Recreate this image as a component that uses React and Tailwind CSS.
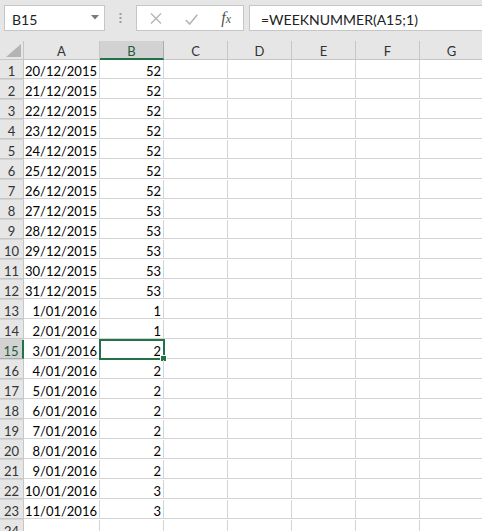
import React from "react";

const rows = [
  ["20/12/2015", 52], ["21/12/2015", 52], ["22/12/2015", 52], ["23/12/2015", 52],
  ["24/12/2015", 52], ["25/12/2015", 52], ["26/12/2015", 52], ["27/12/2015", 53],
  ["28/12/2015", 53], ["29/12/2015", 53], ["30/12/2015", 53], ["31/12/2015", 53],
  ["1/01/2016", 1], ["2/01/2016", 1], ["3/01/2016", 2], ["4/01/2016", 2],
  ["5/01/2016", 2], ["6/01/2016", 2], ["7/01/2016", 2], ["8/01/2016", 2],
  ["9/01/2016", 2], ["10/01/2016", 3], ["11/01/2016", 3], ["", ""],
];

const cols = ["A", "B", "C", "D", "E", "F", "G"];
const gridCols = "grid grid-cols-[24px_76px_64px_64px_64px_64px_64px_64px]";

export default function App() {
  return (
    <div
      className="w-[482px] h-[531px] overflow-hidden bg-white text-[13px] text-black"
      style={{ fontFamily: "Lato, 'Open Sans', sans-serif" }}
    >
      {/* toolbar */}
      <div className="h-[41px] bg-[#e6e6e6] flex items-start pt-[5px] pl-[4px]">
        <div className="w-[101px] h-[26px] bg-white border border-[#c6c6c6] flex items-center justify-between pl-[7px] pr-[5px]">
          <span className="text-[14px] text-[#222] pt-[2px]">B15</span>
          <svg width="8" height="5" viewBox="0 0 8 5" className="mt-[-1px]">
            <path d="M0 0 H8 L4 4.5 Z" fill="#7a7a7a" />
          </svg>
        </div>
        <div className="w-[31px] h-[26px] flex items-center justify-center">
          <svg width="3" height="11" viewBox="0 0 3 11">
            <rect x="0.5" y="0" width="2" height="2" fill="#9c9c9c" />
            <rect x="0.5" y="4" width="2" height="2" fill="#9c9c9c" />
            <rect x="0.5" y="8" width="2" height="2" fill="#9c9c9c" />
          </svg>
        </div>
        <div className="w-[108px] h-[26px] bg-white border border-[#c6c6c6] flex items-center">
          <div className="w-[37px] flex justify-center pl-[1px]">
            <svg width="12" height="11" viewBox="0 0 12 11">
              <path d="M1 0.5 L11 10.5 M11 0.5 L1 10.5" stroke="#b4b4b4" strokeWidth="1.3" fill="none" />
            </svg>
          </div>
          <div className="w-[36px] flex justify-center pt-[2px]">
            <svg width="13" height="11" viewBox="0 0 13 11">
              <path d="M0.8 6 L4.6 10 L12.3 0.8" stroke="#b4b4b4" strokeWidth="1.6" fill="none" />
            </svg>
          </div>
          <div className="w-[34px] flex justify-center">
            <span
              className="italic text-[16px] text-[#555] leading-none"
              style={{ fontFamily: "'Liberation Serif', 'DejaVu Serif', serif" }}
            >
              f<span className="text-[12px]">x</span>
            </span>
          </div>
        </div>
        <div className="ml-[5px] flex-1 h-[26px] bg-white border border-r-0 border-[#c6c6c6] flex items-center pl-[11px]">
          <span className="text-[14px] text-[#222] pt-[2px]">=WEEKNUMMER(A15;1)</span>
        </div>
      </div>

      {/* column header row */}
      <div className={`${gridCols} h-[19px] bg-[#e6e6e6]`}>
        <div className="relative border-r border-b border-[#c6c6c6] bg-[#e6e6e6]">
          <svg width="15" height="13" viewBox="0 0 15 13" className="absolute right-[2px] bottom-[2px]">
            <path d="M15 0 V13 H0 Z" fill="#b4b4b4" />
          </svg>
        </div>
        {cols.map((c) => (
          <div
            key={c}
            className={
              c === "B"
                ? "border-r border-b-2 border-r-[#ababab] border-b-[#217346] bg-[#d2d2d2] flex items-center justify-center text-[#1e5c3a] pt-[3px]"
                : "border-r border-b border-[#c6c6c6] flex items-center justify-center text-[#333] pt-[3px]"
            }
          >
            <span className="leading-none">{c}</span>
          </div>
        ))}
      </div>

      {/* rows */}
      {rows.map(([a, b], i) => {
        const n = i + 1;
        const sel = n === 15;
        return (
          <div key={n} className={`${gridCols} h-[20px]`}>
            <div
              className={
                sel
                  ? "bg-[#d2d2d2] border-b border-[#ababab] border-r-2 border-r-[#217346] flex items-center justify-center text-[#1e5c3a] pt-[5px]"
                  : "bg-[#e6e6e6] border-r border-b border-[#c6c6c6] flex items-center justify-center text-[#333] pt-[5px]"
              }
            >
              <span className="leading-none">{n}</span>
            </div>
            <div className="border-r border-b border-[#d4d4d4] flex items-center justify-end pr-[2px] pt-[5px]">
              <span className="leading-none">{a}</span>
            </div>
            <div className="relative border-r border-b border-[#d4d4d4] flex items-center justify-end pr-[2px] pt-[5px]">
              <span className="leading-none">{b}</span>
              {sel && (
                <>
                  <div className="absolute left-[-1px] top-[-1px] right-[-2px] bottom-[-2px] border-2 border-[#217346]" />
                  <div className="absolute right-[-4px] bottom-[-4px] w-[7px] h-[7px] bg-[#217346] border border-white" />
                </>
              )}
            </div>
            {[0, 1, 2, 3, 4].map((k) => (
              <div key={k} className="border-r border-b border-[#d4d4d4]" />
            ))}
            <div className="border-b border-[#d4d4d4]" />
          </div>
        );
      })}
    </div>
  );
}
